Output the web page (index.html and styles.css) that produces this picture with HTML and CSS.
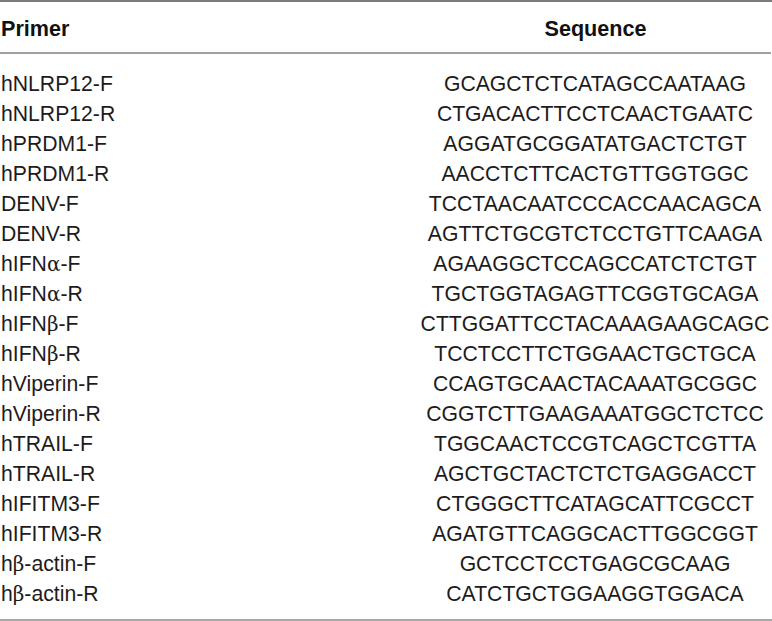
FILE: index.html
```html
<!DOCTYPE html>
<html>
<head>
<meta charset="utf-8">
<link rel="stylesheet" href="styles.css">
</head>
<body>
<div class="tbl">
  <div class="head">
    <div class="c1">Primer</div>
    <div class="c2">Sequence</div>
  </div>
  <div class="body">
    <div class="row"><div class="c1">hNLRP12-F</div><div class="c2">GCAGCTCTCATAGCCAATAAG</div></div>
    <div class="row"><div class="c1">hNLRP12-R</div><div class="c2">CTGACACTTCCTCAACTGAATC</div></div>
    <div class="row"><div class="c1">hPRDM1-F</div><div class="c2">AGGATGCGGATATGACTCTGT</div></div>
    <div class="row"><div class="c1">hPRDM1-R</div><div class="c2">AACCTCTTCACTGTTGGTGGC</div></div>
    <div class="row"><div class="c1">DENV-F</div><div class="c2">TCCTAACAATCCCACCAACAGCA</div></div>
    <div class="row"><div class="c1">DENV-R</div><div class="c2">AGTTCTGCGTCTCCTGTTCAAGA</div></div>
    <div class="row"><div class="c1">hIFN<span class="gk">α</span>-F</div><div class="c2">AGAAGGCTCCAGCCATCTCTGT</div></div>
    <div class="row"><div class="c1">hIFN<span class="gk">α</span>-R</div><div class="c2">TGCTGGTAGAGTTCGGTGCAGA</div></div>
    <div class="row"><div class="c1">hIFN<span class="gk">β</span>-F</div><div class="c2">CTTGGATTCCTACAAAGAAGCAGC</div></div>
    <div class="row"><div class="c1">hIFN<span class="gk">β</span>-R</div><div class="c2">TCCTCCTTCTGGAACTGCTGCA</div></div>
    <div class="row"><div class="c1">hViperin-F</div><div class="c2">CCAGTGCAACTACAAATGCGGC</div></div>
    <div class="row"><div class="c1">hViperin-R</div><div class="c2">CGGTCTTGAAGAAATGGCTCTCC</div></div>
    <div class="row"><div class="c1">hTRAIL-F</div><div class="c2">TGGCAACTCCGTCAGCTCGTTA</div></div>
    <div class="row"><div class="c1">hTRAIL-R</div><div class="c2">AGCTGCTACTCTCTGAGGACCT</div></div>
    <div class="row"><div class="c1">hIFITM3-F</div><div class="c2">CTGGGCTTCATAGCATTCGCCT</div></div>
    <div class="row"><div class="c1">hIFITM3-R</div><div class="c2">AGATGTTCAGGCACTTGGCGGT</div></div>
    <div class="row"><div class="c1">h<span class="gk">β</span>-actin-F</div><div class="c2">GCTCCTCCTGAGCGCAAG</div></div>
    <div class="row"><div class="c1">h<span class="gk">β</span>-actin-R</div><div class="c2">CATCTGCTGGAAGGTGGACA</div></div>
  </div>
</div>
</body>
</html>
```
FILE: styles.css
```css
html, body {
  margin: 0;
  padding: 0;
  background: #ffffff;
}
body {
  font-family: "Liberation Sans", Arial, sans-serif;
  font-size: 21.2px;
  color: #1e1b1c;
}
.tbl {
  width: 772px;
  border-top: 2px solid #7c7c7c;
  border-bottom: 2px solid #a8a8a8;
}
.head {
  display: grid;
  grid-template-columns: 420px 1fr;
  padding: 12px 0 8px;
  border-bottom: 2px solid #a0a0a0;
  margin-right: 1px;
  font-weight: bold;
  font-size: 21.6px;
  color: #111;
  line-height: 30px;
  height: 30px;
}
.body {
  padding: 15px 0 10px;
}
.row {
  display: grid;
  grid-template-columns: 418px 1fr;
  height: 30px;
  line-height: 30px;
}
.c1 {
  padding-left: 1px;
  white-space: nowrap;
}
.c2 {
  text-align: center;
  white-space: nowrap;
}
.gk {
  font-family: "DejaVu Serif", serif;
  font-size: 20px;
}
```
